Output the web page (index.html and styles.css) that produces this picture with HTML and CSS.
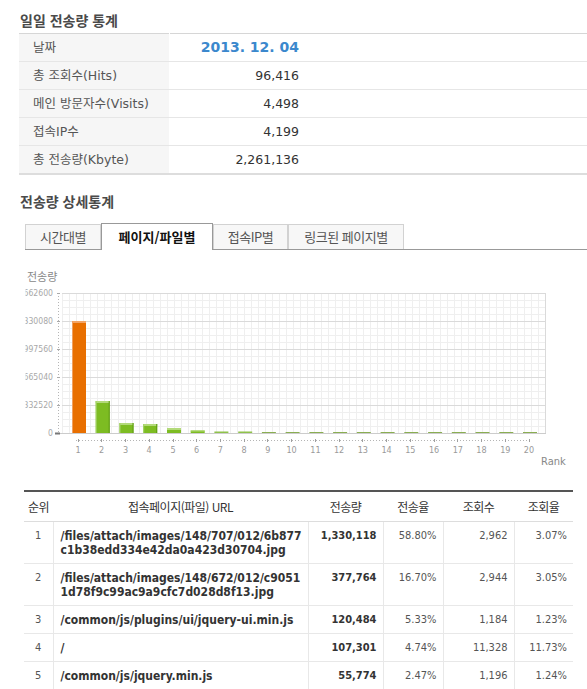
FILE: index.html
```html
<!DOCTYPE html>
<html lang="ko">
<head>
<meta charset="utf-8">
<title>일일 전송량 통계</title>
<link rel="stylesheet" href="styles.css">
</head>
<body>
<div class="page">
  <h2 class="sec-title">일일 전송량 통계</h2>
  <table class="summary">
    <tr><td class="lbl">날짜</td><td class="val date">2013. 12. 04</td><td class="rest"></td></tr>
    <tr><td class="lbl">총 조회수(Hits)</td><td class="val">96,416</td><td class="rest"></td></tr>
    <tr><td class="lbl">메인 방문자수(Visits)</td><td class="val">4,498</td><td class="rest"></td></tr>
    <tr><td class="lbl">접속IP수</td><td class="val">4,199</td><td class="rest"></td></tr>
    <tr class="last"><td class="lbl">총 전송량(Kbyte)</td><td class="val">2,261,136</td><td class="rest"></td></tr>
  </table>

  <h2 class="sec-title sec2">전송량 상세통계</h2>
  <ul class="tabs">
    <li class="tab t1">시간대별</li>
    <li class="tab t2 active">페이지/파일별</li>
    <li class="tab t3">접속IP별</li>
    <li class="tab t4">링크된 페이지별</li>
  </ul>

  <div class="chart">
    <svg class="chart-svg" width="568" height="210" viewBox="0 0 568 210">
      <defs>
        <pattern id="minor" x="62" y="293" width="7" height="7" patternUnits="userSpaceOnUse">
          <path d="M0.5 0V7M0 0.5H7" stroke="#efefef" stroke-width="1" fill="none"/>
        </pattern>
        <clipPath id="ylabclip"><rect x="25.5" y="250" width="100" height="220"/></clipPath>
      </defs>
      <g transform="translate(-19,-262)">
        <text class="axis-title" x="27" y="281">전송량</text>

        <rect x="62" y="293" width="483" height="140" fill="url(#minor)"/>
        <path d="M62 293.5H545.5M62 321.5H545.5M62 349.5H545.5M62 377.5H545.5M62 405.5H545.5" stroke="#dadada" fill="none"/>
        <path d="M545.5 293V433" stroke="#dadada" fill="none"/>
        <path d="M59 433.5H546" stroke="#cccccc" fill="none"/>

        <path d="M58.5 293V433" stroke="#b5b5b5" stroke-dasharray="1 2" fill="none"/>
        <path d="M57 293.5H60M57 321.5H60M57 349.5H60M57 377.5H60M57 405.5H60" stroke="#aaaaaa" fill="none"/>
        <rect x="55" y="432.5" width="5" height="2" fill="#777777"/>

        <g class="ylab" clip-path="url(#ylabclip)">
          <text x="53" y="296">1662600</text>
          <text x="53" y="324">1330080</text>
          <text x="53" y="352">997560</text>
          <text x="53" y="380">665040</text>
          <text x="53" y="408">332520</text>
          <text x="53" y="436">0</text>
        </g>

        <!-- bar 1 -->
        <rect x="72" y="321" width="14" height="112" fill="#e86f00"/>
        <rect x="72" y="321" width="14" height="2" fill="#f2a466"/>
        <rect x="72" y="321" width="1" height="112" fill="#f0a060"/>
        <!-- bar 2..20 -->
        <g class="gbar">
          <rect x="95.7" y="401" width="14" height="32" fill="#7dbc22"/>
          <rect x="95.7" y="401" width="14" height="2" fill="#b3da7a"/>
          <rect x="95.7" y="401" width="1" height="32" fill="#a6d46a"/>
          <rect x="108.7" y="401" width="1" height="32" fill="#5f9a14"/>

          <rect x="119.5" y="423" width="14" height="10" fill="#7dbc22"/>
          <rect x="119.5" y="423" width="14" height="2" fill="#b3da7a"/>
          <rect x="119.5" y="423" width="1" height="10" fill="#a6d46a"/>
          <rect x="132.5" y="423" width="1" height="10" fill="#5f9a14"/>

          <rect x="143.2" y="424" width="14" height="9" fill="#7dbc22"/>
          <rect x="143.2" y="424" width="14" height="2" fill="#b3da7a"/>
          <rect x="143.2" y="424" width="1" height="9" fill="#a6d46a"/>
          <rect x="156.2" y="424" width="1" height="9" fill="#5f9a14"/>

          <rect x="167" y="428" width="14" height="5" fill="#7dbc22"/>
          <rect x="167" y="428" width="14" height="2" fill="#b3da7a"/>

          <rect x="190.7" y="430.5" width="14" height="2.5" fill="#7dbc22"/>
          <rect x="190.7" y="430.5" width="14" height="1" fill="#b3da7a"/>

          <rect x="214.4" y="431.5" width="14" height="1.5" fill="#8fc24a"/>
          <rect x="238.2" y="431.5" width="14" height="1.5" fill="#8fc24a"/>

          <rect x="261.9" y="432" width="14" height="1" fill="#8aae52"/>
          <rect x="285.6" y="432" width="14" height="1" fill="#8aae52"/>
          <rect x="309.4" y="432" width="14" height="1" fill="#8aae52"/>
          <rect x="333.1" y="432" width="14" height="1" fill="#8aae52"/>
          <rect x="356.8" y="432" width="14" height="1" fill="#8aae52"/>
          <rect x="380.6" y="432" width="14" height="1" fill="#8aae52"/>
          <rect x="404.3" y="432" width="14" height="1" fill="#8aae52"/>
          <rect x="428.1" y="432" width="14" height="1" fill="#8aae52"/>
          <rect x="451.8" y="432" width="14" height="1" fill="#8aae52"/>
          <rect x="475.5" y="432" width="14" height="1" fill="#8aae52"/>
          <rect x="499.3" y="432" width="14" height="1" fill="#8aae52"/>
          <rect x="523" y="432" width="14" height="1" fill="#8aae52"/>
        </g>

        <path d="M76 440.5H531" stroke="#b5b5b5" stroke-dasharray="1 2" fill="none"/>
        <path d="M78.5 439V442M101.5 439V442M125.5 439V442M149.5 439V442M173.5 439V442M196.5 439V442M220.5 439V442M244.5 439V442M267.5 439V442M291.5 439V442M315.5 439V442M339.5 439V442M362.5 439V442M386.5 439V442M410.5 439V442M434.5 439V442M457.5 439V442M481.5 439V442M505.5 439V442M529.5 439V442" stroke="#a0a0a0" fill="none"/>

        <g class="xlab">
          <text x="78" y="453">1</text>
          <text x="101.7" y="453">2</text>
          <text x="125.5" y="453">3</text>
          <text x="149.2" y="453">4</text>
          <text x="173" y="453">5</text>
          <text x="196.7" y="453">6</text>
          <text x="220.4" y="453">7</text>
          <text x="244.2" y="453">8</text>
          <text x="267.9" y="453">9</text>
          <text x="291.6" y="453">10</text>
          <text x="315.4" y="453">11</text>
          <text x="339.1" y="453">12</text>
          <text x="362.8" y="453">13</text>
          <text x="386.6" y="453">14</text>
          <text x="410.3" y="453">15</text>
          <text x="434.1" y="453">16</text>
          <text x="457.8" y="453">17</text>
          <text x="481.5" y="453">18</text>
          <text x="505.3" y="453">19</text>
          <text x="529" y="453">20</text>
        </g>
        <text class="rank" x="541" y="465">Rank</text>
      </g>
    </svg>
  </div>

  <table class="detail">
    <colgroup>
      <col class="c-rank"><col class="c-url"><col class="c-amt"><col class="c-amtp"><col class="c-hit"><col class="c-hitp">
    </colgroup>
    <thead>
      <tr><th>순위</th><th>접속페이지(파일) URL</th><th>전송량</th><th>전송율</th><th>조회수</th><th>조회율</th></tr>
    </thead>
    <tbody>
      <tr><td class="rk">1</td><td class="url">/files/attach/images/148/707/012/6b877<br>c1b38edd334e42da0a423d30704.jpg</td><td class="amt">1,330,118</td><td class="num">58.80%</td><td class="num">2,962</td><td class="num">3.07%</td></tr>
      <tr><td class="rk">2</td><td class="url">/files/attach/images/148/672/012/c9051<br>1d78f9c99ac9a9cfc7d028d8f13.jpg</td><td class="amt">377,764</td><td class="num">16.70%</td><td class="num">2,944</td><td class="num">3.05%</td></tr>
      <tr><td class="rk">3</td><td class="url">/common/js/plugins/ui/jquery-ui.min.js</td><td class="amt">120,484</td><td class="num">5.33%</td><td class="num">1,184</td><td class="num">1.23%</td></tr>
      <tr><td class="rk">4</td><td class="url">/</td><td class="amt">107,301</td><td class="num">4.74%</td><td class="num">11,328</td><td class="num">11.73%</td></tr>
      <tr><td class="rk">5</td><td class="url">/common/js/jquery.min.js</td><td class="amt">55,774</td><td class="num">2.47%</td><td class="num">1,196</td><td class="num">1.24%</td></tr>
      <tr><td class="rk">&nbsp;</td><td class="url">&nbsp;</td><td class="amt">&nbsp;</td><td class="num">&nbsp;</td><td class="num">&nbsp;</td><td class="num">&nbsp;</td></tr>
    </tbody>
  </table>
</div>
</body>
</html>
```

FILE: styles.css
```css
body {
  margin: 0;
  background: #ffffff;
  color: #333333;
  font-family: "DejaVu Sans Condensed", "DejaVu Sans", "Noto Sans CJK KR", sans-serif;
}

.page {
  padding-left: 19px;
}

.sec-title {
  margin: 0 0 4px 0;
  padding: 11px 0 0 1px;
  font-family: "Noto Sans CJK KR", sans-serif;
  font-size: 14px;
  line-height: 18px;
  font-weight: bold;
  color: #4a4a4a;
}

.sec2 {
  padding-top: 17px;
  margin-bottom: 13px;
}

/* summary table */
.summary {
  width: 568px;
  border-collapse: collapse;
  border-top: 1px solid #d6d6d6;
}

.summary td {
  padding: 0;
  height: 27px;
  line-height: 27px;
  font-size: 12.5px;
  font-family: "DejaVu Sans", "Noto Sans CJK KR", sans-serif;
  border-bottom: 1px solid #e6e6e6;
  white-space: nowrap;
}

.summary .last td {
  border-bottom: 2px solid #dddddd;
}

.summary .lbl {
  width: 136px;
  padding-left: 14px;
  background: #f6f6f6;
  color: #555555;
  border-right: 1px solid #ffffff;
}

.summary .val {
  width: 129px;
  padding-right: 11px;
  text-align: right;
  color: #333333;
}

.summary .date {
  font-weight: bold;
  font-size: 14px;
  color: #3b88cd;
}

/* tabs */
.tabs {
  display: flex;
  align-items: flex-end;
  list-style: none;
  margin: 0 0 0 6px;
  padding: 0;
  height: 26px;
  border-bottom: 1px solid #999999;
}

.tab {
  box-sizing: border-box;
  height: 25px;
  line-height: 24px;
  border: 1px solid #d2d2d2;
  border-bottom: none;
  background: #f7f7f7;
  text-align: center;
  font-size: 13px;
  color: #555555;
  font-family: "Noto Sans CJK KR", sans-serif;
  letter-spacing: -0.5px;
}

.tab.active {
  height: 27px;
  line-height: 26px;
  margin-bottom: -1px;
  border-color: #999999;
  background: #ffffff;
  color: #111111;
  font-weight: bold;
  letter-spacing: 0;
}

.t1 { width: 76px; }
.t2 { width: 112px; }
.t3 { width: 75px; }
.t4 { width: 116px; }

/* chart */
.chart {
  margin-top: 12px;
  height: 210px;
}

.chart-svg {
  display: block;
}

.axis-title {
  font-family: "Noto Sans CJK KR", sans-serif;
  font-size: 11px;
  fill: #888888;
}

.ylab text {
  font-family: "DejaVu Sans Condensed", "DejaVu Sans", sans-serif;
  font-size: 8.6px;
  fill: #a8a8a8;
  text-anchor: end;
}

.xlab text {
  font-family: "DejaVu Sans Condensed", "DejaVu Sans", sans-serif;
  font-size: 9px;
  fill: #9a9a9a;
  text-anchor: middle;
}

.rank {
  font-family: "DejaVu Sans Condensed", "DejaVu Sans", sans-serif;
  font-size: 11px;
  fill: #888888;
}

/* detail table */
.detail {
  margin: 18px 0 0 5px;
  width: 549px;
  border-collapse: collapse;
  table-layout: fixed;
  border-top: 2px solid #555555;
}

.c-rank { width: 29px; }
.c-url { width: 255px; }
.c-amt { width: 75px; }
.c-amtp { width: 60px; }
.c-hit { width: 71px; }
.c-hitp { width: 59px; }

.detail th {
  height: 29px;
  padding: 0;
  font-family: "Noto Sans CJK KR", sans-serif;
  font-weight: normal;
  font-size: 12px;
  color: #333333;
  text-align: center;
  border-bottom: 1px solid #dddddd;
  letter-spacing: -0.5px;
}

.detail td {
  padding: 7px 6px 6px 6px;
  line-height: 14px;
  vertical-align: top;
  font-size: 11px;
  color: #555555;
  border-bottom: 1px solid #e8e8e8;
  border-left: 1px solid #e8e8e8;
  white-space: nowrap;
}

.detail td.rk {
  border-left: none;
  text-align: center;
  padding-left: 2px;
  padding-right: 2px;
}

.detail td.url {
  padding-left: 7px;
  font-size: 12px;
  font-weight: bold;
  color: #333333;
  overflow: hidden;
}

.detail td.amt {
  text-align: right;
  font-weight: bold;
  color: #333333;
}

.detail td.num {
  text-align: right;
}
```
